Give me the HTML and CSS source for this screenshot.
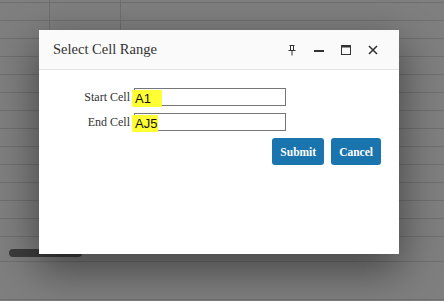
FILE: index.html
```html
<!DOCTYPE html>
<html lang="en">
<head>
    <meta charset="UTF-8">
    <meta name="viewport" content="width=device-width, initial-scale=1.0">
    <title>Select Cell Range</title>
    <link rel="stylesheet" href="styles.css">
</head>
<body>
    <div class="sheet">
        <div class="row row-first"><div class="cell head"></div><div class="cell col-a"></div><div class="cell"></div></div>
        <div class="row"><div class="cell head"></div><div class="cell col-a"></div><div class="cell"></div></div>
        <div class="row"><div class="cell head"></div><div class="cell col-a"></div><div class="cell"></div></div>
        <div class="row"><div class="cell head"></div><div class="cell col-a"></div><div class="cell"></div></div>
        <div class="row"><div class="cell head"></div><div class="cell col-a"></div><div class="cell"></div></div>
        <div class="row"><div class="cell head"></div><div class="cell col-a"></div><div class="cell"></div></div>
        <div class="row"><div class="cell head"></div><div class="cell col-a"></div><div class="cell"></div></div>
        <div class="row"><div class="cell head"></div><div class="cell col-a"></div><div class="cell"></div></div>
        <div class="row"><div class="cell head"></div><div class="cell col-a"></div><div class="cell"></div></div>
        <div class="row"><div class="cell head"></div><div class="cell col-a"></div><div class="cell"></div></div>
        <div class="row"><div class="cell head"></div><div class="cell col-a"></div><div class="cell"></div></div>
        <div class="row"><div class="cell head"></div><div class="cell col-a"></div><div class="cell"></div></div>
        <div class="row"><div class="cell head"></div><div class="cell col-a"></div><div class="cell"></div></div>
        <div class="row"><div class="cell head"></div><div class="cell col-a"></div><div class="cell"></div></div>
        <div class="hscroll"><div class="thumb"></div></div>
        <div class="tabs"></div>
    </div>

    <div class="dialog">
        <div class="dialog-header">
            <span class="dialog-title">Select Cell Range</span>
            <div class="dialog-tools">
                <svg class="tool" width="12" height="12" viewBox="0 0 12 12">
                    <path d="M3.5 1.5h5M4.5 1.5v5M7.5 1.5v5M2.5 6.5h7M6 6.5v5" stroke="#333" stroke-width="1" fill="none"/>
                </svg>
                <svg class="tool" width="12" height="12" viewBox="0 0 12 12">
                    <path d="M1 7h10" stroke="#333" stroke-width="2" fill="none"/>
                </svg>
                <svg class="tool" width="12" height="12" viewBox="0 0 12 12">
                    <rect x="1.5" y="1.5" width="9" height="9" stroke="#333" stroke-width="1" fill="none"/>
                    <path d="M1 2.5h10" stroke="#333" stroke-width="2"/>
                </svg>
                <svg class="tool" width="12" height="12" viewBox="0 0 12 12">
                    <path d="M2 2l8 8M10 2l-8 8" stroke="#333" stroke-width="1.6" fill="none"/>
                </svg>
            </div>
        </div>
        <div class="dialog-body">
            <div class="field">
                <label class="field-label">Start Cell</label>
                <div class="field-box"><span class="mark mark-start">A1</span></div>
            </div>
            <div class="field">
                <label class="field-label">End Cell</label>
                <div class="field-box"><span class="mark mark-end">AJ5</span></div>
            </div>
            <div class="actions">
                <button class="btn">Submit</button>
                <button class="btn">Cancel</button>
            </div>
        </div>
    </div>
</body>
</html>
```

FILE: styles.css
```css
body {
    margin: 0;
    background-color: #7f7f7f;
    font-family: "Liberation Serif", "Times New Roman", serif;
    overflow: hidden;
}
.sheet {
    height: 301px;
}
.row {
    display: flex;
    height: 17px;
    border-bottom: 1px solid #6f6f6f;
}
.row-first {
    height: 2px;
}
.cell {
    flex: 1;
}
.head {
    flex: none;
    width: 49px;
    border-right: 1px solid #6f6f6f;
}
.col-a {
    flex: none;
    width: 70px;
    border-right: 1px solid #6f6f6f;
}
.hscroll {
    height: 12px;
    padding-top: 12px;
    border-bottom: 1px solid #6f6f6f;
}
.thumb {
    margin-left: 9px;
    width: 73px;
    height: 8px;
    border-radius: 4px;
    background-color: #3c3c3c;
}
.tabs {
    height: 37px;
    border-bottom: 1px solid #6f6f6f;
}
.dialog {
    position: absolute;
    left: 39px;
    top: 30px;
    width: 360px;
    height: 224px;
    background-color: white;
    box-shadow: 0 14px 40px 2px rgba(0,0,0,0.45);
}
.dialog-header {
    display: flex;
    align-items: center;
    justify-content: space-between;
    height: 39px;
    padding: 0 20px 0 14px;
    background-color: #fafafa;
    border-bottom: 1px solid #e3e3e3;
}
.dialog-title {
    font-size: 14.5px;
    color: #333;
}
.dialog-tools {
    display: flex;
    gap: 15px;
    margin-top: 1px;
}
.tool {
    display: block;
}
.dialog-body {
    padding: 18px 18px 0 0;
}
.field {
    display: flex;
    align-items: center;
    height: 18px;
    margin-bottom: 7px;
}
.field-label {
    width: 91px;
    text-align: right;
    font-size: 12px;
    color: #333;
    margin-right: 4px;
}
.field-box {
    width: 150px;
    height: 16px;
    border: 1px solid #767676;
    display: flex;
    align-items: center;
}
.mark {
    margin-left: -3px;
    height: 17px;
    padding-left: 3px;
    background-color: #ffff33;
    font-family: "Liberation Sans", Arial, sans-serif;
    font-size: 13px;
    line-height: 17px;
    color: #111;
    box-sizing: border-box;
    margin-top: 2px;
}
.mark-start {
    width: 30px;
}
.mark-end {
    width: 26px;
}
.actions {
    display: flex;
    justify-content: flex-end;
    gap: 7px;
    margin-top: 6px;
}
.btn {
    height: 27px;
    padding: 0 8px;
    border: none;
    border-radius: 3px;
    background-color: #1a74ad;
    color: white;
    font-family: "Liberation Serif", "Times New Roman", serif;
    font-size: 11.5px;
    font-weight: bold;
    cursor: pointer;
}
```
